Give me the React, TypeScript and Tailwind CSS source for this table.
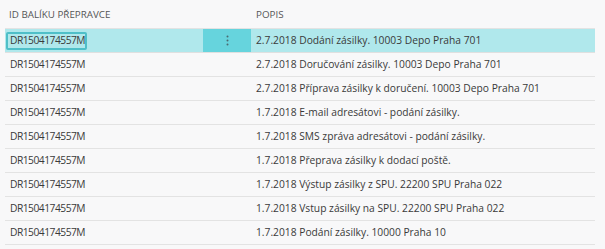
const rows = [
  "2.7.2018 Dodání zásilky. 10003 Depo Praha 701",
  "2.7.2018 Doručování zásilky. 10003 Depo Praha 701",
  "2.7.2018 Příprava zásilky k doručení. 10003 Depo Praha 701",
  "1.7.2018 E-mail adresátovi - podání zásilky.",
  "1.7.2018 SMS zpráva adresátovi - podání zásilky.",
  "1.7.2018 Přeprava zásilky k dodací poště.",
  "1.7.2018 Výstup zásilky z SPU. 22200 SPU Praha 022",
  "1.7.2018 Vstup zásilky na SPU. 22200 SPU Praha 022",
  "1.7.2018 Podání zásilky. 10000 Praha 10",
];

export default function App() {
  return (
    <div
      className="w-[605px] h-[249px] overflow-hidden bg-[#f8f8f9] text-[#3a3a3a] pl-[5px] pr-[10px] pt-[3px]"
      style={{ fontFamily: '"Open Sans", "Noto Sans", sans-serif' }}
    >
      <div className="flex h-[25px] items-center text-[9.8px] text-[#555]">
        <div className="w-[198px] pl-[4px]">ID BALÍKU PŘEPRAVCE</div>
        <div className="w-[48px]" />
        <div className="pl-[5px]">POPIS</div>
      </div>
      <div className="border-t border-[#e3e3e3]">
        {rows.map((text, i) => {
          const sel = i === 0;
          return (
            <div
              key={i}
              className={
                "flex h-[24px] items-center border-b text-[10.25px] " +
                (sel ? "bg-[#b0e8ec] border-[#e0e0e0]" : "border-[#e3e3e3]")
              }
            >
              <div className="w-[198px] h-full flex items-center pl-[1px]">
                {sel ? (
                  <div className="h-[18px] w-[81px] flex items-center pl-[2px] border-2 border-[#4fbfc8] rounded-[2px] tracking-[-0.5px]">
                    DR1504174557M
                  </div>
                ) : (
                  <div className="pl-[4px] tracking-[-0.5px]">DR1504174557M</div>
                )}
              </div>
              <div
                className={
                  "w-[48px] h-full flex items-center justify-center " +
                  (sel ? "bg-[#66d4dd]" : "")
                }
              >
                {sel && (
                  <svg width="3" height="11" viewBox="0 0 3 11">
                    <circle cx="1.5" cy="1.5" r="1" fill="#4a6a70" />
                    <circle cx="1.5" cy="5.5" r="1" fill="#4a6a70" />
                    <circle cx="1.5" cy="9.5" r="1" fill="#4a6a70" />
                  </svg>
                )}
              </div>
              <div className="pl-[5px] whitespace-nowrap">{text}</div>
            </div>
          );
        })}
      </div>
    </div>
  );
}
